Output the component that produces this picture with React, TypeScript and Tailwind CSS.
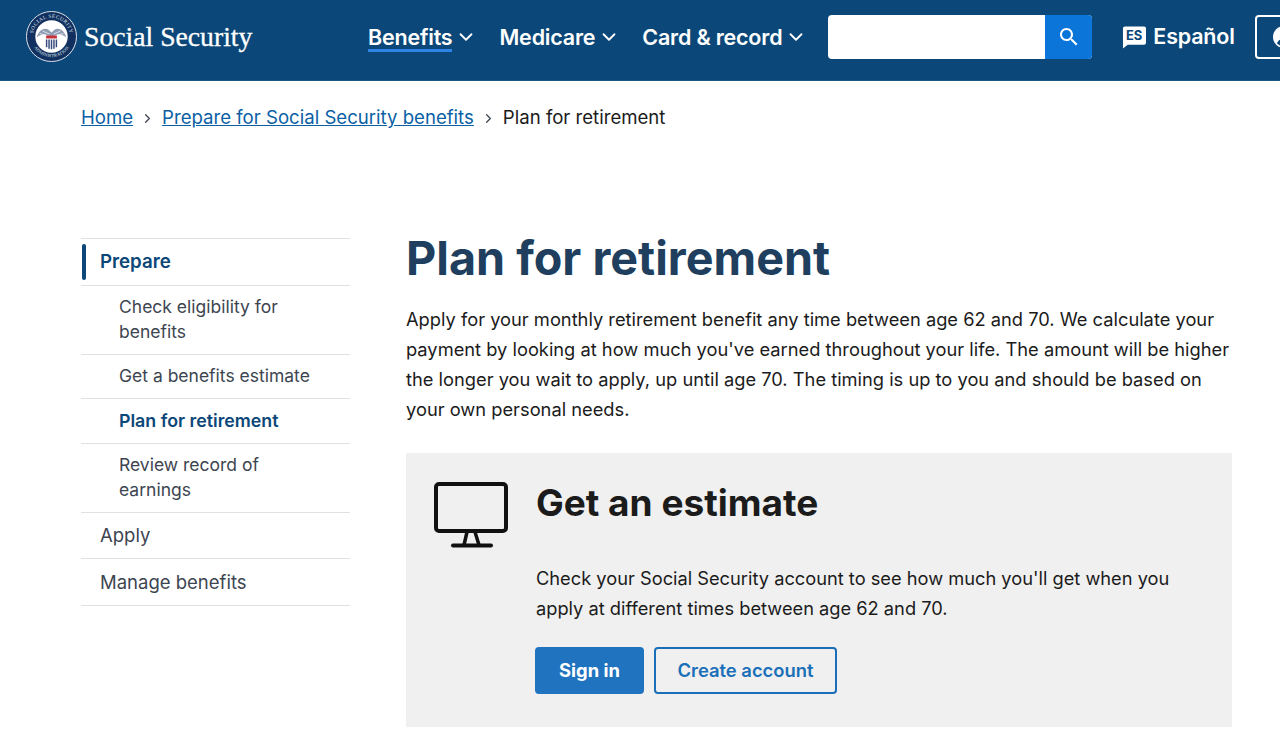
import { ChevronDown, ChevronRight } from "lucide-react";

const font = "font-['Inter','Liberation_Sans',sans-serif]";

function Seal() {
  return (
    <svg width="51" height="51" viewBox="0 0 52 52" className="shrink-0">
      <circle cx="26" cy="26" r="25.5" fill="#12305f" stroke="#dfe6ee" strokeWidth="1" />
      <circle cx="26" cy="26" r="16.500" fill="#ffffff" />
      <path id="sealTop" d="M7 26a19 19 0 0 1 38 0" fill="none" />
      <path id="sealBottom" d="M5 26a21 21 0 0 0 42 0" fill="none" />
      <text fontSize="5.400" fill="#dfe6ee" fontFamily="Liberation Serif, serif" letterSpacing="0.4">
        <textPath href="#sealTop" startOffset="50%" textAnchor="middle">SOCIAL SECURITY</textPath>
      </text>
      <text fontSize="4.600" fill="#dfe6ee" fontFamily="Liberation Serif, serif" letterSpacing="0.2">
        <textPath href="#sealBottom" startOffset="50%" textAnchor="middle">ADMINISTRATION</textPath>
      </text>
      <path d="M11 27c1-6 7-11 12-8l3 3 3-3c5-3 11 2 12 8-3-3-8-4-11-2l-4 1-4-1c-3-2-8-1-11 2z" fill="#8f9cb4" />
      <path d="M14 23l8 2M17 20.500l7 3M38 23l-8 2M35 20.500l-7 3" stroke="#fff" strokeWidth="0.7" />
      <rect x="20.500" y="25" width="11" height="3" fill="#c8303a" />
      <path d="M21 29v8M23.500 29v9.500M26 29v10M28.500 29v9.500M31 29v8" stroke="#36497a" strokeWidth="1.500" />
    </svg>
  );
}

function SearchGlyph() {
  return (
    <svg width="24" height="24" viewBox="0 0 24 24" fill="#fff">
      <path d="M15.500 14h-.79l-.28-.27C15.410 12.590 16 11.110 16 9.500 16 5.910 13.090 3 9.500 3S3 5.910 3 9.500 5.910 16 9.500 16c1.610 0 3.090-.59 4.230-1.570l.27.28v.79l5 4.990L20.490 19l-4.990-5zm-6 0C7.010 14 5 11.990 5 9.500S7.010 5 9.500 5 14 7.010 14 9.500 11.990 14 9.500 14z" />
    </svg>
  );
}

function NavItem({ label, active }: { label: string; active?: boolean }) {
  return (
    <a className="flex items-center gap-[2px] whitespace-nowrap text-[21.5px] font-semibold tracking-[-0.2px] text-white">
      <span className={active ? "border-y-[3px] border-t-transparent border-b-[#2e85e6] leading-[24px]" : "border-y-[3px] border-transparent leading-[24px]"}>{label}</span>
      <ChevronDown size={22} strokeWidth={2} className="mx-[1px]" />
    </a>
  );
}

function SideLink({ label, active }: { label: string; active?: boolean }) {
  return (
    <li className="border-b border-[#dfe1e2] text-[17.5px] leading-[24.5px]">
      <a className={`block py-[9.5px] pl-[38px] pr-[40px] ${active ? "text-[17.8px] font-semibold text-[#0b4778]" : "text-[#3d4551]"}`}>{label}</a>
    </li>
  );
}

function TopLink({ label }: { label: string }) {
  return (
    <li className="border-b border-[#dfe1e2] text-[18.5px] leading-[24.5px]">
      <a className="block py-[10.5px] pl-[19px] text-[#3d4551]">{label}</a>
    </li>
  );
}

export default function App() {
  return (
    <div className={`${font} h-[739px] w-[1280px] overflow-hidden bg-white text-[#1b1b1b]`}>
      <header className="flex h-[81px] items-center overflow-hidden border-b border-[#1a5a82] bg-[#0b4778] pb-[7px] pl-[26px]">
        <Seal />
        <span className="ml-[7px] w-[284px] shrink-0 font-['Liberation_Serif',serif] text-[27.7px] text-white [-webkit-text-stroke:0.3px_white]">Social Security</span>
        <nav className="flex shrink-0 gap-[21px]">
          <NavItem label="Benefits" active />
          <NavItem label="Medicare" />
          <NavItem label="Card & record" />
        </nav>
        <div className="ml-[20px] flex h-[44px] w-[264px] shrink-0 overflow-hidden rounded-[4px] bg-white">
          <div className="flex-1" />
          <div className="flex w-[47px] items-center justify-center bg-[#0b75d9]">
            <SearchGlyph />
          </div>
        </div>
        <a className="ml-[30px] flex shrink-0 items-center gap-[7px] text-[21.5px] font-semibold tracking-[-0.2px] text-white">
          <svg width="24" height="24" viewBox="0 0 25 24">
            <path d="M3 1h20a2 2 0 0 1 2 2v15a2 2 0 0 1-2 2H6l-5 4V3a2 2 0 0 1 2-2z" fill="#fff" />
            <text x="12.500" y="15.500" textAnchor="middle" fontSize="13.500" fontWeight="700" fill="#0b4778" fontFamily="Inter, sans-serif">ES</text>
          </svg>
          Español
        </a>
        <a className="ml-[20px] flex h-[44px] w-[120px] shrink-0 items-center rounded-[4px] border-2 border-white pl-[15px]">
          <svg width="24" height="24" viewBox="0 0 24 24" className="shrink-0">
            <circle cx="12" cy="12" r="11" fill="#fff" />
            <circle cx="12" cy="9" r="3.600" fill="#0b4778" />
            <path d="M5 18.500c1-3.500 4-4.500 7-4.500s6 1 7 4.500c-2 1.800-4.500 2.700-7 2.700s-5-.9-7-2.700z" fill="#0b4778" />
          </svg>
        </a>
      </header>

      <nav className="flex h-[74px] items-center px-[81px] text-[18.6px]">
        <a className="text-[#0b5fa5] underline">Home</a>
        <ChevronRight size={15} className="mx-[7px] text-[#3d4551]" />
        <a className="text-[#0b5fa5] underline">Prepare for Social Security benefits</a>
        <ChevronRight size={15} className="mx-[7px] text-[#3d4551]" />
        <span>Plan for retirement</span>
      </nav>

      <div className="flex px-[81px] pt-[83px]">
        <aside className="w-[269px] shrink-0">
          <ul className="border-t border-[#dfe1e2]">
            <li className="relative border-b border-[#dfe1e2] text-[18.7px] leading-[24.5px]">
              <span className="absolute bottom-[5px] left-[1px] top-[5px] w-[4px] rounded-full bg-[#0b4778]" />
              <a className="block pb-[10px] pl-[19px] pt-[11px] font-semibold text-[#0b4778]">Prepare</a>
            </li>
            <SideLink label="Check eligibility for benefits" />
            <SideLink label="Get a benefits estimate" />
            <SideLink active label="Plan for retirement" />
            <SideLink label="Review record of earnings" />
            <TopLink label="Apply" />
            <TopLink label="Manage benefits" />
          </ul>
        </aside>

        <main className="ml-[56px] w-[826px] shrink-0">
          <h1 className="-mt-[2px] text-[46.7px] font-bold leading-[44px] text-[#203f5e]">Plan for retirement</h1>
          <p className="mt-[24px] whitespace-nowrap text-[18.3px] leading-[30px]">
            Apply for your monthly retirement benefit any time between age 62 and 70. We calculate your
            <br />
            payment by looking at how much you've earned throughout your life. The amount will be higher
            <br />
            the longer you wait to apply, up until age 70. The timing is up to you and should be based on
            <br />
            your own personal needs.
          </p>
          <section className="mt-[29px] flex h-[274px] bg-[#f0f0f0] pl-[28px] pt-[29px]">
            <svg width="74" height="66" viewBox="0 0 74 66" fill="none" className="shrink-0">
              <rect x="2" y="2" width="70" height="47" rx="3" stroke="#111" strokeWidth="4" />
              <path d="M33 50l-3 13M41 50l4 13" stroke="#111" strokeWidth="3.500" />
              <path d="M19 63.500h38" stroke="#111" strokeWidth="4" strokeLinecap="round" />
            </svg>
            <div className="ml-[28px]">
              <h2 className="text-[37px] font-bold leading-[42px]">Get an estimate</h2>
              <p className="mt-[39px] w-[660px] text-[18.25px] leading-[30px]">
                Check your Social Security account to see how much you'll get when you apply at different times between age 62 and 70.
              </p>
              <div className="-ml-[1px] mt-[24px] flex gap-[10px]">
                <a className="flex h-[47px] w-[109px] items-center justify-center rounded-[4px] bg-[#1f73bf] text-[18.4px] font-bold text-white">Sign in</a>
                <a className="flex h-[47px] w-[183px] items-center justify-center rounded-[4px] border-2 border-[#1a6fb8] text-[18.4px] font-semibold text-[#1a6fb8]">Create account</a>
              </div>
            </div>
          </section>
        </main>
      </div>
    </div>
  );
}
